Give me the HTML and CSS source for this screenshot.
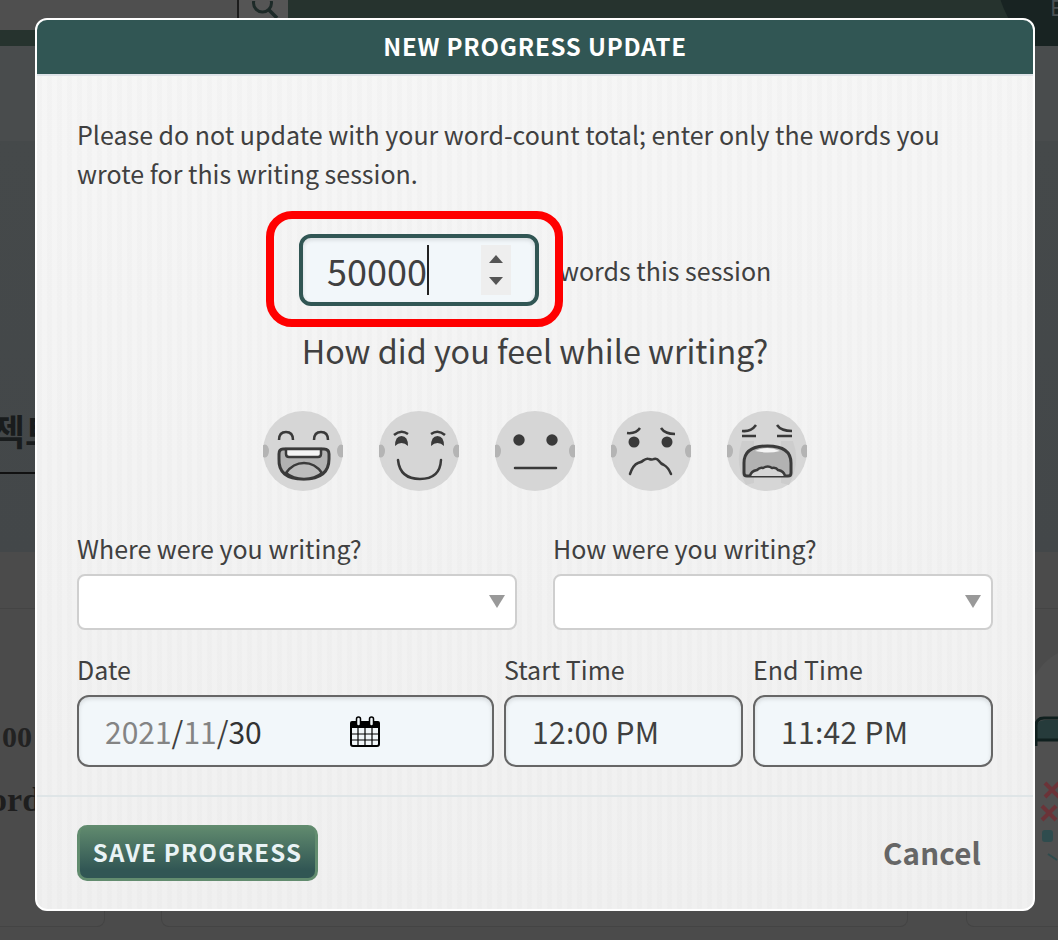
FILE: index.html
```html
<!DOCTYPE html>
<html>
<head>
  <meta charset="UTF-8">
  <title>New Progress Update</title>
  <link rel="stylesheet" href="styles.css">
</head>
<body>
  <!-- page behind the modal -->
  <div class="page">
    <header class="topbar">
      <div class="top-left">
        <div class="top-left-band"></div>
      </div>
      <div class="search-btn">
        <svg width="30" height="18" viewBox="0 0 30 18"><circle cx="11.5" cy="2" r="9" fill="none" stroke="#1d2a28" stroke-width="3"/><path d="M18 9l8 8" stroke="#1d2a28" stroke-width="3.5"/></svg>
      </div>
      <div class="top-right"><div class="top-circle"></div><span class="top-e">E</span></div>
    </header>
    <section class="hero">
      <div class="hero-title">젝트</div>
    </section>
    <section class="lower">
      <div class="lower-head"></div>
      <div class="stat">00</div>
      <div class="stat-name">Words</div>
    </section>
    <div class="bottom-strip">
      <div class="strip-card strip-a"></div>
      <div class="strip-card strip-b"></div>
      <div class="strip-card strip-c"></div>
    </div>
  </div>
  <div class="badge-art">
    <svg width="24" height="240" viewBox="0 0 24 240">
      <path d="M0 37Q10 20 24 13V240H0z" fill="#505050"/>
      <path d="M3 100V87q0-7 8-7h13v20z" fill="#263b3b"/>
      <path d="M2 106V86q0-8 8-8h14M2 100h22" fill="none" stroke="#10201f" stroke-width="3"/>
      <path d="M11 143l14 14M25 143l-14 14M8 166l14 14M22 166l-14 14" stroke="#6b3338" stroke-width="4"/>
      <rect x="8" y="190" width="11" height="12" rx="3" fill="#2f4c4e"/>
      <path d="M14 214l9 6" stroke="#2f4c4e" stroke-width="2"/>
    </svg>
  </div>

  <div class="modal">
    <div class="modal-head">NEW PROGRESS UPDATE</div>
    <div class="modal-body">
      <p class="note">Please do not update with your word-count total; enter only the words you wrote for this writing session.</p>
      <div class="count-row">
        <div class="count-box">
          <span class="count-val">50000</span><span class="caret"></span>
          <span class="spinner"><i class="up"></i><i class="down"></i></span>
        </div>
        <span class="count-label">words this session</span>
      </div>
      <div class="feel">How did you feel while writing?</div>
      <div class="faces">
        <svg class="face" viewBox="0 0 80 80"><circle cx="40" cy="40" r="40" fill="#d6d6d6"/><ellipse cx="2" cy="40" rx="4" ry="6.5" fill="#b4b4b4"/><ellipse cx="78" cy="40" rx="4" ry="6.5" fill="#b4b4b4"/><path d="M16 29q0-8 7-8t7 8M51 29q0-8 7-8t7 8" fill="none" stroke="#3a3a3a" stroke-width="2.5"/><path d="M20 38h41q5 0 5 5v5q0 20-25.500 20T16 48v-5q0-5 4-5z" fill="#b2b2b2" stroke="#3a3a3a" stroke-width="3"/><path d="M23 38h35v5q0 3-3 3H26q-3 0-3-3z" fill="#f4f4f4" stroke="#3a3a3a" stroke-width="2.500"/><path d="M23 62q7-10 18-10t18 10q-7 6-18 6t-18-6z" fill="#bcbcbc" stroke="#3a3a3a" stroke-width="2.500"/></svg>
        <svg class="face" viewBox="0 0 80 80"><circle cx="40" cy="40" r="40" fill="#d6d6d6"/><ellipse cx="2" cy="40" rx="4" ry="6.5" fill="#b4b4b4"/><ellipse cx="78" cy="40" rx="4" ry="6.5" fill="#b4b4b4"/><path d="M15 24q7-6 14-1M52 23q7-5 14 1" fill="none" stroke="#3a3a3a" stroke-width="2.500"/><path d="M16 35q0-10 6.500-10t6.500 10q-3-3-6.500-3t-6.500 3zM52 35q0-10 6.500-10t6.500 10q-3-3-6.500-3t-6.500 3z" fill="#3a3a3a"/><path d="M19 49q2 19 22 19t21-19" fill="none" stroke="#3a3a3a" stroke-width="2.500" stroke-linecap="round"/></svg>
        <svg class="face" viewBox="0 0 80 80"><circle cx="40" cy="40" r="40" fill="#d6d6d6"/><ellipse cx="2" cy="40" rx="4" ry="6.5" fill="#b4b4b4"/><ellipse cx="78" cy="40" rx="4" ry="6.5" fill="#b4b4b4"/><circle cx="24" cy="29" r="5.700" fill="#3a3a3a"/><circle cx="57" cy="29" r="5.700" fill="#3a3a3a"/><path d="M20 57h41" stroke="#3a3a3a" stroke-width="2.500" stroke-linecap="round"/></svg>
        <svg class="face" viewBox="0 0 80 80"><circle cx="40" cy="40" r="40" fill="#d6d6d6"/><ellipse cx="2" cy="40" rx="4" ry="6.5" fill="#b4b4b4"/><ellipse cx="78" cy="40" rx="4" ry="6.5" fill="#b4b4b4"/><path d="M16 22q9 1 13-5M50 17q4 6 14 6" fill="none" stroke="#3a3a3a" stroke-width="2.500"/><circle cx="23" cy="31" r="5.500" fill="#3a3a3a"/><circle cx="56" cy="31" r="5.500" fill="#3a3a3a"/><path d="M19 63q3-9 8-11 4-1 6-3 3-2 5-1 3 1 5 0 3-1 5 2 2 3 5 4 4 2 7 9" fill="none" stroke="#3a3a3a" stroke-width="2.500" stroke-linecap="round"/></svg>
        <svg class="face" viewBox="0 0 80 80"><circle cx="40" cy="40" r="40" fill="#d6d6d6"/><path d="M15 30q-8 22 4 44l8-2V30zM54 30v42l8 2q12-22 4-44z" fill="#cdcdcd"/><ellipse cx="2" cy="40" rx="4" ry="6.5" fill="#b4b4b4"/><ellipse cx="78" cy="40" rx="4" ry="6.5" fill="#b4b4b4"/><path d="M15 20q9 1 14-6M50 14q4 6 15 6M15 25h14M50 25h15" fill="none" stroke="#3a3a3a" stroke-width="2.500"/><path d="M17 62V52q0-17 23.500-17T64 52v10q0 3-3 3H20q-3 0-3-3z" fill="#b2b2b2" stroke="#3a3a3a" stroke-width="3"/><path d="M28 40q12-6 25 0-12 3-25 0z" fill="#f4f4f4"/><path d="M23 65q1-5 7-6 3-3 6-2 5-3 9 0 4-1 6 2 6 1 7 6" fill="#d6d6d6" stroke="#3a3a3a" stroke-width="2.500"/></svg>
      </div>
      <div class="two-cols">
        <div class="field">
          <label class="lbl">Where were you writing?</label>
          <div class="select"><i class="arrow"></i></div>
        </div>
        <div class="field">
          <label class="lbl">How were you writing?</label>
          <div class="select"><i class="arrow"></i></div>
        </div>
      </div>
      <div class="date-row">
        <div class="field date-field">
          <label class="lbl">Date</label>
          <div class="input date-input">
            <span class="date-text"><span class="dim">2021</span>/<span class="dim">11</span>/<span class="dark">30</span></span>
            <svg class="cal" width="30" height="32" viewBox="0 0 30 32">
              <path d="M2 7h26q1 0 1 1v21q0 2-2 2H3q-2 0-2-2V8q0-1 1-1z" fill="#f2f7fa" stroke="#000" stroke-width="2"/>
              <path d="M2 7h26v6H2z" fill="#000"/>
              <path d="M1 19h28M1 25h28M8 13v17M15 13v17M22 13v17" stroke="#000" stroke-width="1.2"/>
              <rect x="6.500" y="2" width="4" height="9" rx="2" fill="#f2f7fa" stroke="#000" stroke-width="1.500"/>
              <rect x="19.500" y="2" width="4" height="9" rx="2" fill="#f2f7fa" stroke="#000" stroke-width="1.500"/>
            </svg>
          </div>
        </div>
        <div class="field time-field start-field">
          <label class="lbl">Start Time</label>
          <div class="input"><span class="time-text">12:00 PM</span></div>
        </div>
        <div class="field time-field">
          <label class="lbl">End Time</label>
          <div class="input"><span class="time-text">11:42 PM</span></div>
        </div>
      </div>
    </div>
    <div class="modal-foot">
      <button class="save-btn">SAVE PROGRESS</button>
      <span class="cancel">Cancel</span>
    </div>
  </div>

  <div class="highlight"></div>
</body>
</html>
```
FILE: styles.css
```css
* {
  box-sizing: border-box;
}
html, body {
  margin: 0;
  height: 940px;
  overflow: hidden;
}
body {
  font-family: "Noto Sans CJK KR", "Noto Sans", sans-serif;
  background: #4b4b4b;
  color: #404040;
  position: relative;
}
.page {
  height: 940px;
  display: flex;
  flex-direction: column;
}
.topbar {
  height: 46px;
  display: flex;
  background: #4f4f4f;
}
.top-left {
  width: 237px;
  padding-top: 30px;
}
.top-left-band {
  height: 16px;
  background: #26332e;
}
.search-btn {
  width: 51px;
  height: 18px;
  overflow: hidden;
  background: #555;
  border-left: 2px solid #1c1c1c;
  padding-left: 12px;
}
.top-right {
  flex: 1;
  background: #26332e;
  position: relative;
  overflow: hidden;
}
.top-circle {
  position: absolute;
  left: 708px;
  top: -130px;
  width: 200px;
  height: 200px;
  border-radius: 50%;
  background: #182322;
}
.top-e {
  position: absolute;
  left: 762px;
  top: -8px;
  font-size: 22px;
  line-height: 28px;
  color: #4a5053;
}
.hero {
  height: 506px;
  background: linear-gradient(#494c4d 0, #494c4d 95px, #45494a 95px, #434749 100%);
  padding-top: 336px;
}
.hero-title {
  height: 92px;
  width: 60px;
  border-bottom: 2px solid #111;
  font-size: 36px;
  font-weight: 700;
  line-height: 44px;
  color: #191c1d;
  white-space: nowrap;
  overflow: hidden;
  padding-top: 26px;
  text-indent: -8px;
}
.lower {
  flex: 1;
  background: #4b4b4b;
}
.lower-head {
  height: 57px;
  border-bottom: 1px solid #444;
}
.stat {
  font-family: "Liberation Serif", serif;
  font-size: 30px;
  font-weight: 700;
  line-height: 36px;
  color: #222;
  margin: 110px 0 0 2px;
}
.stat-name {
  font-family: "Liberation Serif", serif;
  font-size: 34px;
  line-height: 40px;
  margin: 25px 0 0 -42px;
  color: #1e1e1e;
  font-weight: 700;
}
.bottom-strip {
  position: absolute;
  left: 0;
  right: 0;
  top: 890px;
  height: 37px;
  display: flex;
}
.strip-card {
  background: #4c4c4c;
  border: 1px solid #444;
  border-top: 0;
  border-radius: 0 0 8px 8px;
}
.strip-a {
  width: 105px;
  border-left: 0;
  border-bottom-left-radius: 0;
}
.strip-b {
  width: 747px;
  margin-left: 56px;
}
.strip-c {
  flex: 1;
  margin-left: 58px;
  border-right: 0;
  border-bottom-right-radius: 0;
}
.badge-art {
  position: absolute;
  left: 1034px;
  top: 640px;
}
.modal {
  position: absolute;
  left: 35px;
  top: 18px;
  width: 1000px;
  height: 893px;
  background:
    repeating-linear-gradient(90deg, rgba(0,0,0,.012) 0, rgba(0,0,0,.012) 5px, transparent 5px, transparent 10px),
    linear-gradient(#f6f6f6, #f0f0f0);
  border: 2px solid #fff;
  border-radius: 12px;
  display: flex;
  flex-direction: column;
}
.modal-head {
  height: 56px;
  flex: none;
  background: #315654;
  border-bottom: 2px solid #dfe3e8;
  border-radius: 10px 10px 0 0;
  color: #fff;
  font-size: 24px;
  font-weight: 700;
  line-height: 52px;
  text-align: center;
  letter-spacing: 0.8px;
}
.modal-body {
  flex: 1;
  padding: 39px 40px 0;
  border-bottom: 2px solid #dfe5e7;
}
.note {
  margin: 0;
  font-size: 25px;
  line-height: 39px;
  width: 900px;
}
.count-row {
  display: flex;
  align-items: center;
  margin: 41px 0 0 222px;
}
.count-box {
  width: 240px;
  height: 72px;
  border: 4px solid #315654;
  border-radius: 12px;
  background: #f2f7fa;
  box-shadow: inset 0 2px 4px rgba(0,0,0,.12);
  font-size: 36px;
  line-height: 64px;
  padding-left: 24px;
  display: flex;
  align-items: center;
}
.caret {
  width: 2px;
  height: 50px;
  background: #222;
}
.spinner {
  margin-left: auto;
  margin-right: 24px;
  width: 30px;
  height: 50px;
  background: #eeeeee;
  display: flex;
  flex-direction: column;
  align-items: center;
  justify-content: center;
  gap: 14px;
}
.spinner i {
  width: 0;
  height: 0;
  border-left: 7px solid transparent;
  border-right: 7px solid transparent;
}
.spinner .up {
  border-bottom: 8px solid #555;
}
.spinner .down {
  border-top: 8px solid #555;
}
.count-label {
  font-size: 25px;
  margin-left: 20px;
  line-height: 30px;
}
.feel {
  text-align: center;
  font-size: 32.3px;
  line-height: 44px;
  margin-top: 22px;
}
.faces {
  display: flex;
  justify-content: center;
  gap: 36px;
  margin-top: 39px;
}
.face {
  width: 80px;
  height: 80px;
}
.two-cols {
  display: grid;
  grid-template-columns: 440px 440px;
  gap: 36px;
  margin-top: 40px;
}
.lbl {
  display: block;
  font-size: 25px;
  line-height: 34px;
  margin-bottom: 9px;
}
.select {
  height: 56px;
  background: #fff;
  border: 2px solid #cfcfcf;
  border-radius: 8px;
  position: relative;
}
.arrow {
  position: absolute;
  right: 10px;
  top: 19px;
  border-left: 8px solid transparent;
  border-right: 8px solid transparent;
  border-top: 13px solid #999;
}
.date-row {
  display: flex;
  gap: 10px;
  margin-top: 22px;
}
.date-field {
  width: 417px;
}
.time-field {
  width: 240px;
}
.start-field {
  width: 239px;
}
.input {
  height: 72px;
  border: 2px solid #666;
  border-radius: 12px;
  background: #f2f7fa;
  box-shadow: inset 0 2px 4px rgba(0,0,0,.12);
  display: flex;
  align-items: center;
  padding-left: 26px;
  font-size: 30px;
  position: relative;
}
.date-text .dim {
  color: #848484;
}
.date-text .dark {
  color: #333;
}
.cal {
  position: absolute;
  left: 271px;
  top: 18px;
}
.time-text {
  white-space: nowrap;
  letter-spacing: 0.3px;
}
.modal-foot {
  height: 112px;
  flex: none;
  display: flex;
  align-items: center;
  justify-content: space-between;
  padding: 0 52px 0 40px;
}
.save-btn {
  width: 241px;
  height: 56px;
  border: 3px solid #628c6f;
  border-top: 0;
  border-radius: 10px;
  background: linear-gradient(#628c6f 0, #315654 85%);
  color: #e9f3f5;
  font: 700 24px "Noto Sans CJK KR", sans-serif;
  letter-spacing: 1.2px;
  padding: 0;
}
.cancel {
  font-size: 29.5px;
  font-weight: 700;
  color: #666;
  letter-spacing: 0.2px;
  margin-bottom: 3px;
}
.highlight {
  position: absolute;
  left: 266px;
  top: 211px;
  width: 297px;
  height: 116px;
  border: 8px solid #ff0000;
  border-radius: 26px;
}
```
